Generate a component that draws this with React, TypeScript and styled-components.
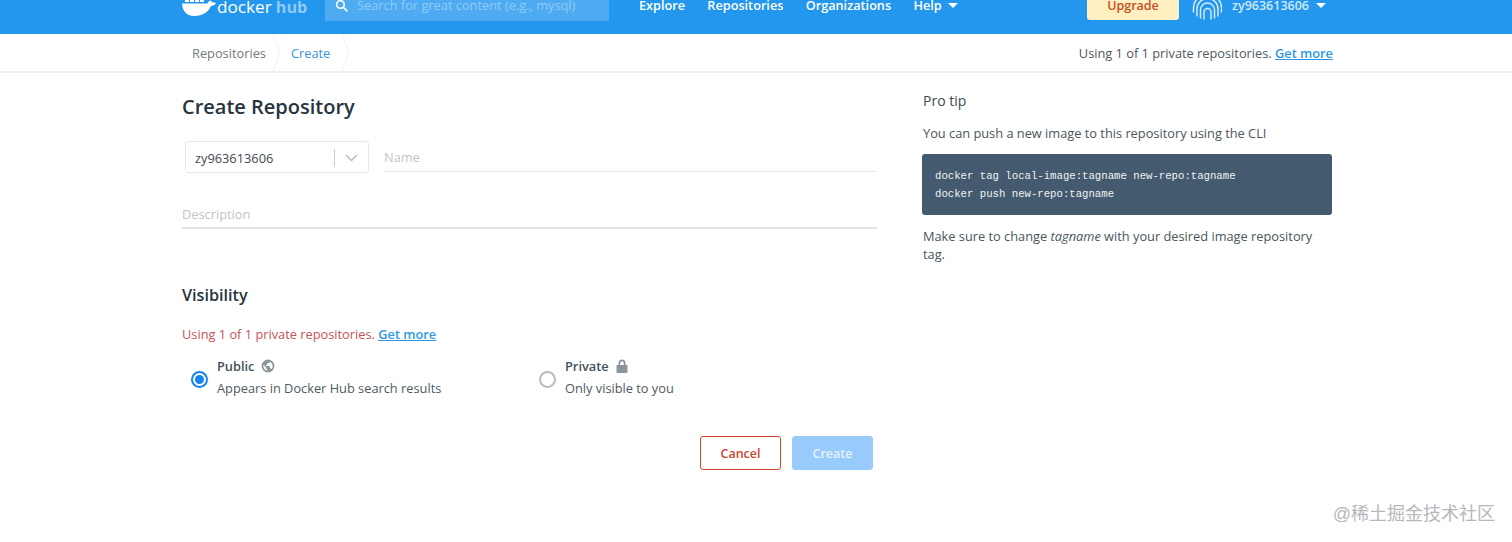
import React from "react";
import styled, { createGlobalStyle } from "styled-components";

const Global = createGlobalStyle`
  html, body { margin: 0; padding: 0; background: #fff; }
  body { font-family: "Open Sans", "Noto Sans", sans-serif; color: #27343f; overflow: hidden; height: 542px; }
  * { box-sizing: border-box; }
`;

const Page = styled.div`
  width: 1512px;
  height: 542px;
  position: relative;
  overflow: hidden;
`;

const NavBar = styled.header`
  height: 34px;
  background: #2396ed;
  overflow: hidden;
`;

const NavRow = styled.div`
  height: 54px;
  margin-top: -22px;
  padding-left: 182px;
  display: flex;
  align-items: center;
`;

const Logo = styled.div`
  width: 143px;
  display: flex;
  align-items: center;
`;

const LogoWord = styled.span`
  margin-left: 1px;
  font-size: 17.2px;
  color: #fff;
  margin-top: 3px;
`;

const LogoHub = styled.span`
  margin-left: 4px;
  font-size: 16.2px;
  font-weight: 700;
  color: #8fcbf6;
  margin-top: 3px;
`;

const SearchBox = styled.div`
  width: 284px;
  height: 32px;
  background: #4fabf1;
  border-radius: 2px;
  display: flex;
  align-items: center;
  padding-left: 10px;
  gap: 9px;
  color: #8ecbf7;
  font-size: 12.8px;
`;

const NavLinks = styled.nav`
  margin-left: 30px;
  width: 448px;
  display: flex;
  gap: 22.3px;
  align-items: center;
`;

const NavLink = styled.span`
  color: #fff;
  font-size: 12.7px;
  font-weight: 600;
  display: flex;
  align-items: center;
  gap: 6px;
`;

const Caret = styled.span`
  width: 0;
  height: 0;
  border-left: 5px solid transparent;
  border-right: 5px solid transparent;
  border-top: 5px solid #fff;
  display: inline-block;
`;

const UpgradeButton = styled.button`
  width: 92px;
  height: 30px;
  padding: 0;
  background: #fff0c2;
  border: 0;
  border-radius: 3px;
  color: #c4511d;
  font: 600 12.5px "Open Sans", sans-serif;
`;

const UserArea = styled.div`
  margin-left: 13px;
  display: flex;
  align-items: center;
  color: #e0f0fc;
  font-size: 12.5px;
  font-weight: 600;
`;

const UserName = styled.span`
  margin-left: 10px;
  margin-right: 7px;
  color: #cfe8fb;
`;

const SubBar = styled.div`
  height: 39px;
  border-bottom: 2px solid #eeeff0;
  padding: 0 179px 0 192px;
  display: flex;
  align-items: center;
  justify-content: space-between;
  font-size: 12.8px;
`;

const Crumbs = styled.div`
  display: flex;
  align-items: center;
  height: 100%;
`;

const Crumb = styled.span<{ $active?: boolean }>`
  color: ${(p) => (p.$active ? "#3b94e0" : "#72797f")};
  margin-right: ${(p) => (p.$active ? "11px" : "6px")};
`;

const Chevron = styled.svg`
  width: 9px;
  height: 37px;
  margin-right: 10px;
  flex: none;
`;

const Usage = styled.div`
  color: #50595f;
`;

const BlueLink = styled.a`
  color: #2e97e6;
  text-decoration: underline;
  font-weight: 600;
`;

const Main = styled.main`
  display: grid;
  grid-template-columns: 695px 410px;
  column-gap: 45px;
  padding-left: 182px;
`;

const FormColumn = styled.section`
  padding-top: 21px;
`;

const Title = styled.h1`
  margin: 0;
  font-size: 20px;
  line-height: 26px;
  font-weight: 600;
  color: #27343f;
`;

const NameRow = styled.div`
  margin-top: 21px;
  padding-left: 3px;
  display: flex;
  gap: 15px;
`;

const SelectBox = styled.div`
  width: 184px;
  height: 32px;
  border: 1px solid #e6e8ea;
  border-radius: 3px;
  display: flex;
  align-items: center;
  padding: 1px 0 0 9px;
  font-size: 12.8px;
  color: #3f4a52;
`;

const SelectValue = styled.span`
  flex: 1;
`;

const SelectSplit = styled.span`
  width: 1px;
  height: 18px;
  background: #c9ced2;
`;

const SelectArrow = styled.span`
  width: 33px;
  display: flex;
  justify-content: center;
`;

const Field = styled.div<{ $grow?: boolean }>`
  ${(p) => (p.$grow ? "flex: 1;" : "")}
  height: 31px;
  border-bottom: 1px solid #e3e5e7;
  color: #bfc4c8;
  font-size: 12.8px;
  line-height: 33px;
`;

const DescriptionField = styled(Field)`
  margin-top: 25px;
  border-bottom-width: 2px;
`;

const SectionTitle = styled.h2`
  margin: 54px 0 0;
  font-size: 16.2px;
  line-height: 24px;
  font-weight: 600;
  color: #27343f;
`;

const Warning = styled.div`
  margin-top: 18px;
  font-size: 12.8px;
  line-height: 18px;
  color: #c4535a;
`;

const Options = styled.div`
  margin-top: 12px;
  padding-left: 9px;
  display: flex;
`;

const Option = styled.div`
  flex: none;
  width: 348px;
  display: flex;
  align-items: center;
`;

const Radio = styled.span<{ $checked?: boolean }>`
  width: 17px;
  height: 17px;
  margin-top: 5px;
  border-radius: 50%;
  border: 2px solid ${(p) => (p.$checked ? "#1683ee" : "#b7bcc0")};
  display: flex;
  align-items: center;
  justify-content: center;
  margin-right: 9px;
  flex: none;
  &::after {
    content: "";
    display: ${(p) => (p.$checked ? "block" : "none")};
    width: 9px;
    height: 9px;
    border-radius: 50%;
    background: #1683ee;
  }
`;

const OptionText = styled.div`
  font-size: 12.8px;
  line-height: 22px;
  color: #4f5a62;
`;

const OptionName = styled.div`
  display: flex;
  align-items: center;
  gap: 7px;
  font-weight: 600;
  color: #45515a;
`;

const Actions = styled.div`
  margin-top: 37px;
  padding-right: 4px;
  display: flex;
  justify-content: flex-end;
  gap: 11px;
`;

const Button = styled.button<{ $primary?: boolean }>`
  width: 81px;
  height: 34px;
  padding: 0;
  border-radius: 3px;
  border: 1px solid ${(p) => (p.$primary ? "#98cbfb" : "#d0452f")};
  background: ${(p) => (p.$primary ? "#98cbfb" : "#fff")};
  color: ${(p) => (p.$primary ? "#e6f3fe" : "#c8452f")};
  font: 600 12.5px "Open Sans", sans-serif;
`;

const TipColumn = styled.aside`
  padding-top: 17px;
`;

const TipTitle = styled.h3`
  margin: 0 0 0 1px;
  font-size: 14px;
  line-height: 22px;
  font-weight: 400;
  color: #3f4a52;
`;

const TipText = styled.p`
  margin: 12px 0 0 1px;
  font-size: 12.8px;
  line-height: 18px;
  color: #4a555d;
`;

const CodeBlock = styled.pre`
  margin: 12px 0 0;
  height: 61px;
  padding: 13px;
  background: #445a6e;
  border-radius: 3px;
  color: #f0f3f5;
  font-family: "Liberation Mono", monospace;
  font-size: 10.67px;
  line-height: 18px;
`;

const TipNote = styled(TipText)`
  margin-top: 12px;
`;

const Watermark = styled.div`
  position: absolute;
  right: 17px;
  bottom: 17px;
  color: #b4b8bc;
  font-family: "Liberation Sans", "Noto Sans CJK SC", sans-serif;
  font-size: 18px;
  line-height: 22px;
`;

const Whale = () => (
  <svg width="34" height="22" viewBox="0 0 34 22" fill="#fff">
    <path d="M0 9.5h25.5c.5-2 2.5-3.2 3.5-3 .5 1 .8 1.5 1 2 1.5-.3 3-.2 4 .6-1 2-3 3-5 3C26.5 18 21 22 12 22 4 22 .3 16 0 9.5z" />
    <path d="M3 3h4v5H3zM8 3h4v5H8zM13 3h4v5h-4zM18 3h4v5h-4zM8-3h4v5H8zM13-3h4v5h-4z" />
  </svg>
);

const Fingerprint = () => (
  <svg width="30" height="30" viewBox="0 0 30 30" fill="none" stroke="#d4eafb" strokeWidth="1.5" strokeLinecap="round">
    <path d="M12 29v-7a3.5 3.5 0 017 0v7" />
    <path d="M8.5 28v-8a7 7 0 0114 0v8" />
    <path d="M5 26v-7a10.5 10.5 0 0121 0v7" />
    <path d="M1.5 22v-4a14 14 0 0128 0v4" />
  </svg>
);

const SearchIcon = () => (
  <svg width="13" height="13" viewBox="0 0 24 24" fill="none" stroke="#fff" strokeWidth="3" strokeLinecap="round">
    <circle cx="10" cy="10" r="7" />
    <path d="M15.5 15.5L22 22" />
  </svg>
);

const Divider = () => (
  <Chevron viewBox="0 0 9 37" fill="none" stroke="#eff0f2" strokeWidth="1">
    <path d="M1 0l7 18.5L1 37" />
  </Chevron>
);

const GlobeIcon = () => (
  <svg width="14" height="14" viewBox="0 0 24 24" fill="#8a949b">
    <path d="M12 1a11 11 0 100 22 11 11 0 000-22zM4 12c0-.8.1-1.5.3-2.2L9 15v1c0 1.1.9 2 2 2v2c-3.9-.5-7-3.9-7-8zm13.9 5.4c-.3-.8-1-1.4-1.9-1.4h-1v-3c0-.6-.4-1-1-1H8v-2h2c.6 0 1-.4 1-1V7h2c1.1 0 2-.9 2-2v-.4c2.9 1.2 5 4 5 7.4 0 2.1-.8 4-2.1 5.4z" />
  </svg>
);

const LockIcon = () => (
  <svg width="12" height="14" viewBox="0 0 12 14" fill="#8a949b">
    <path d="M2.5 6V4a3.5 3.5 0 017 0v2h1c.6 0 1 .4 1 1v6c0 .6-.4 1-1 1h-9c-.6 0-1-.4-1-1V7c0-.6.4-1 1-1h1zm1.7 0h3.6V4a1.8 1.8 0 00-3.6 0v2z" />
  </svg>
);

const ChevronDown = () => (
  <svg width="13" height="8" viewBox="0 0 13 8" fill="none" stroke="#b9bfc4" strokeWidth="1.5">
    <path d="M1 1l5.5 5.5L12 1" />
  </svg>
);

export default function App() {
  return (
    <Page>
      <Global />
      <NavBar>
        <NavRow>
          <Logo>
            <Whale />
            <LogoWord>docker</LogoWord>
            <LogoHub>hub</LogoHub>
          </Logo>
          <SearchBox>
            <SearchIcon />
            <span>Search for great content (e.g., mysql)</span>
          </SearchBox>
          <NavLinks>
            <NavLink>Explore</NavLink>
            <NavLink>Repositories</NavLink>
            <NavLink>Organizations</NavLink>
            <NavLink>
              Help <Caret />
            </NavLink>
          </NavLinks>
          <UpgradeButton>Upgrade</UpgradeButton>
          <UserArea>
            <Fingerprint />
            <UserName>zy963613606</UserName>
            <Caret />
          </UserArea>
        </NavRow>
      </NavBar>
      <SubBar>
        <Crumbs>
          <Crumb>Repositories</Crumb>
          <Divider />
          <Crumb $active>Create</Crumb>
          <Divider />
        </Crumbs>
        <Usage>
          Using 1 of 1 private repositories. <BlueLink>Get more</BlueLink>
        </Usage>
      </SubBar>
      <Main>
        <FormColumn>
          <Title>Create Repository</Title>
          <NameRow>
            <SelectBox>
              <SelectValue>zy963613606</SelectValue>
              <SelectSplit />
              <SelectArrow>
                <ChevronDown />
              </SelectArrow>
            </SelectBox>
            <Field $grow>Name</Field>
          </NameRow>
          <DescriptionField>Description</DescriptionField>
          <SectionTitle>Visibility</SectionTitle>
          <Warning>
            Using 1 of 1 private repositories. <BlueLink>Get more</BlueLink>
          </Warning>
          <Options>
            <Option>
              <Radio $checked />
              <OptionText>
                <OptionName>
                  Public <GlobeIcon />
                </OptionName>
                Appears in Docker Hub search results
              </OptionText>
            </Option>
            <Option>
              <Radio />
              <OptionText>
                <OptionName>
                  Private <LockIcon />
                </OptionName>
                Only visible to you
              </OptionText>
            </Option>
          </Options>
          <Actions>
            <Button>Cancel</Button>
            <Button $primary>Create</Button>
          </Actions>
        </FormColumn>
        <TipColumn>
          <TipTitle>Pro tip</TipTitle>
          <TipText>You can push a new image to this repository using the CLI</TipText>
          <CodeBlock>
            docker tag local-image:tagname new-repo:tagname{"\n"}docker push new-repo:tagname
          </CodeBlock>
          <TipNote>
            Make sure to change <em>tagname</em> with your desired image repository tag.
          </TipNote>
        </TipColumn>
      </Main>
      <Watermark>@稀土掘金技术社区</Watermark>
    </Page>
  );
}
